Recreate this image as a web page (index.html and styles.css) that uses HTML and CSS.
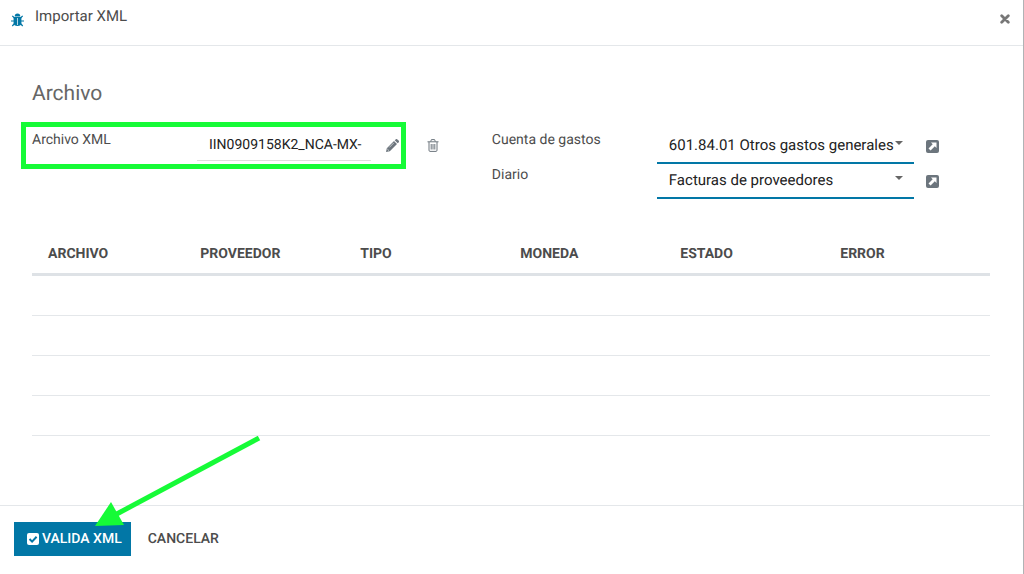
FILE: index.html
```html
<!DOCTYPE html>
<html lang="es">
<head>
  <meta charset="UTF-8" />
  <meta name="viewport" content="width=device-width, initial-scale=1.0"/>
  <title>Importar XML</title>
  <link rel="stylesheet" href="styles.css">
</head>
<body>
  <div class="modal">
    <header class="modal-header">
      <button class="icon-btn debug" type="button" aria-label="Depurar">
        <svg width="13" height="14" viewBox="0 0 13 14">
          <path d="M3.700 3.400a2.800 3 0 0 1 5.600 0z" fill="currentColor"/>
          <path d="M2.600 4h7.800v5.800a3.900 3.200 0 0 1-7.800 0z" fill="currentColor"/>
          <path d="M3.500 5L1.300 2.800M9.500 5l2.200-2.200M3 8H0M10 8h3M3.500 10.500L1.300 13M9.500 10.500l2.200 2.500" stroke="currentColor" stroke-width="1.200" fill="none"/>
          <path d="M6.500 5V12" stroke="#fff" stroke-width=".7"/>
        </svg>
      </button>
      <h1>Importar XML</h1>
      <button class="icon-btn close" type="button" aria-label="Cerrar">
        <svg width="10" height="10" viewBox="0 0 10 10">
          <path d="M1.700 1.700l6.600 6.600M8.300 1.700L1.700 8.300" stroke="currentColor" stroke-width="2.800" stroke-linecap="round"/>
        </svg>
      </button>
    </header>

    <main class="modal-body">
      <h2>Archivo</h2>

      <div class="groups">
        <div class="group">
          <div class="field">
            <label for="archivo">Archivo XML</label>
            <input class="file-name" type="text" id="archivo" value="IIN0909158K2_NCA-MX-" readonly>
            <button class="icon-btn edit" type="button" aria-label="Editar">
              <svg width="13" height="13" viewBox="0 0 13 13">
                <path d="M0 13l.8-3.800L8 2l3 3-7.200 7.200zM8.700 1.300L9.600.4a1.300 1.300 0 0 1 1.800 0l1.200 1.200a1.300 1.300 0 0 1 0 1.800l-.9.900z" fill="currentColor"/>
                <path d="M1.300 10l1.700 1.700M3.300 8.400l4.500-4.500" stroke="#fff" stroke-width=".6"/>
              </svg>
            </button>
            <button class="icon-btn trash" type="button" aria-label="Borrar">
              <svg width="12" height="13" viewBox="0 0 12 13" fill="none" stroke="currentColor">
                <path d="M.5 2.800h11M3.700 2.500l.7-1.900h3.200l.7 1.900M2 3v8.200q0 1.200 1 1.200h6q1 0 1-1.200V3M4.200 5v5.500M6 5v5.500M7.800 5v5.500"/>
              </svg>
            </button>
            <span class="highlight"></span>
          </div>
        </div>

        <div class="group">
          <div class="field">
            <label for="cuenta">Cuenta de gastos</label>
            <div class="select">
              <select id="cuenta">
                <option>601.84.01 Otros gastos generales</option>
              </select>
            </div>
            <button class="icon-btn open" type="button" aria-label="Abrir cuenta">
              <svg width="13" height="13" viewBox="0 0 13 13">
                <rect width="13" height="13" rx="2" fill="currentColor"/>
                <path d="M5 2.500h5.500V8L8.800 6.300l-4.200 4.200-2.100-2.100 4.200-4.200z" fill="#fff"/>
              </svg>
            </button>
          </div>
          <div class="field">
            <label for="diario">Diario</label>
            <div class="select">
              <select id="diario">
                <option>Facturas de proveedores</option>
              </select>
            </div>
            <button class="icon-btn open" type="button" aria-label="Abrir diario">
              <svg width="13" height="13" viewBox="0 0 13 13">
                <rect width="13" height="13" rx="2" fill="currentColor"/>
                <path d="M5 2.500h5.500V8L8.800 6.300l-4.200 4.200-2.100-2.100 4.200-4.200z" fill="#fff"/>
              </svg>
            </button>
          </div>
        </div>
      </div>

      <table>
        <thead>
          <tr>
            <th class="first">Archivo</th>
            <th>Proveedor</th>
            <th>Tipo</th>
            <th>Moneda</th>
            <th>Estado</th>
            <th class="last">Error</th>
          </tr>
        </thead>
        <tbody>
          <tr><td colspan="6"></td></tr>
          <tr><td colspan="6"></td></tr>
          <tr><td colspan="6"></td></tr>
          <tr><td colspan="6"></td></tr>
        </tbody>
      </table>
    </main>

    <footer class="modal-footer">
      <button class="btn btn-primary" type="button">
        <svg width="12" height="12" viewBox="0 0 12 12">
          <rect width="12" height="12" rx="2" fill="#fff"/>
          <path d="M2.500 6l2.600 2.600 4.500-4.800" stroke="#0277a6" stroke-width="2" fill="none"/>
        </svg>
        Valida XML
      </button>
      <button class="btn btn-link" type="button">Cancelar</button>
      <svg class="arrow" width="166" height="92" viewBox="0 0 166 92">
        <path d="M164 2L18 80" stroke="#16fb37" stroke-width="5"/>
        <path d="M0 90L16 66l13 23z" fill="#16fb37"/>
      </svg>
    </footer>
  </div>
</body>
</html>
```

FILE: styles.css
```css
:root {
  --brand: #0277a6;
  --text: #4c4c4c;
  --line: #e4e7ea;
  --mark: #16fb37;
}

* {
  box-sizing: border-box;
}

body {
  margin: 0;
  font-family: Roboto, "Liberation Sans", sans-serif;
  font-size: 14px;
  line-height: 22px;
  text-rendering: geometricPrecision;
  color: var(--text);
  background: #fff;
}

button, input, select {
  font: inherit;
  color: inherit;
  text-rendering: inherit;
}

.modal {
  display: flex;
  flex-direction: column;
  min-height: 100vh;
  border-right: 1px solid #b0b3b5;
}

.modal-header {
  display: flex;
  align-items: flex-start;
  gap: 11px;
  padding: 5px 13px 18px 11px;
  border-bottom: 1px solid var(--line);
}

h1, h2 {
  margin: 0;
  font-weight: 400;
}

h1 {
  flex: 1;
  font-size: 15px;
  line-height: 22px;
}

.icon-btn {
  display: flex;
  padding: 0;
  border: none;
  background: none;
  color: #6c757d;
  cursor: pointer;
}

.debug {
  margin-top: 8px;
  color: var(--brand);
}

.close {
  margin-top: 9px;
  color: #777;
}

.modal-body {
  flex: 1;
  padding: 33px 33px 32px 32px;
}

h2 {
  margin-bottom: 20px;
  font-size: 21px;
  line-height: 30px;
  color: #666;
}

.groups {
  display: grid;
  grid-template-columns: 48% 52%;
}

.field {
  position: relative;
  display: flex;
  align-items: flex-start;
  height: 35px;
}

.field label {
  width: 165px;
}

.file-name {
  width: 174px;
  height: 32px;
  padding: 0 8px 0 12px;
  border: none;
  border-bottom: 1px solid #ddd;
  background: none;
  color: #222;
  outline: none;
}

.edit {
  margin: 10px 28px 0 15px;
}

.trash {
  margin-top: 10px;
}

.highlight {
  position: absolute;
  top: -7px;
  left: -11px;
  width: 385px;
  height: 47px;
  border: 5px solid var(--mark);
  pointer-events: none;
}

.select {
  position: relative;
  width: 257px;
}

.select::after {
  content: "";
  position: absolute;
  top: 12px;
  right: 11px;
  border: 4px solid transparent;
  border-top-color: #666;
  border-bottom: none;
  pointer-events: none;
}

.select select {
  display: block;
  width: 100%;
  height: 35px;
  padding: 0 18px 1px 12px;
  border: none;
  border-bottom: 2px solid var(--brand);
  border-radius: 0;
  background: none;
  color: #222;
  font-size: 15px;
  appearance: none;
  outline: none;
}

.open {
  margin: 11px 0 0 12px;
}

table {
  width: 100%;
  margin-top: 34px;
  border-collapse: separate;
  border-spacing: 0;
  table-layout: fixed;
}

th {
  width: 16.7%;
  height: 43px;
  padding: 1px 16px 0;
  border-bottom: 3px solid #dee2e6;
  font-weight: 700;
  text-align: left;
  text-transform: uppercase;
}

.first {
  width: 15.9%;
}

.last {
  width: auto;
}

td {
  height: 40px;
  padding: 0;
  border-bottom: 1px solid var(--line);
}

.modal-footer {
  position: relative;
  display: flex;
  gap: 4px;
  padding: 16px 14px 18px;
  border-top: 1px solid var(--line);
}

.btn {
  display: flex;
  align-items: center;
  gap: 3px;
  height: 34px;
  padding: 0 13px;
  border: none;
  background: none;
  font-weight: 500;
  text-transform: uppercase;
  cursor: pointer;
}

.btn-primary {
  padding: 0 9px 0 13px;
  background: var(--brand);
  color: #fff;
}

.arrow {
  position: absolute;
  top: -70px;
  left: 95px;
  pointer-events: none;
}
```
